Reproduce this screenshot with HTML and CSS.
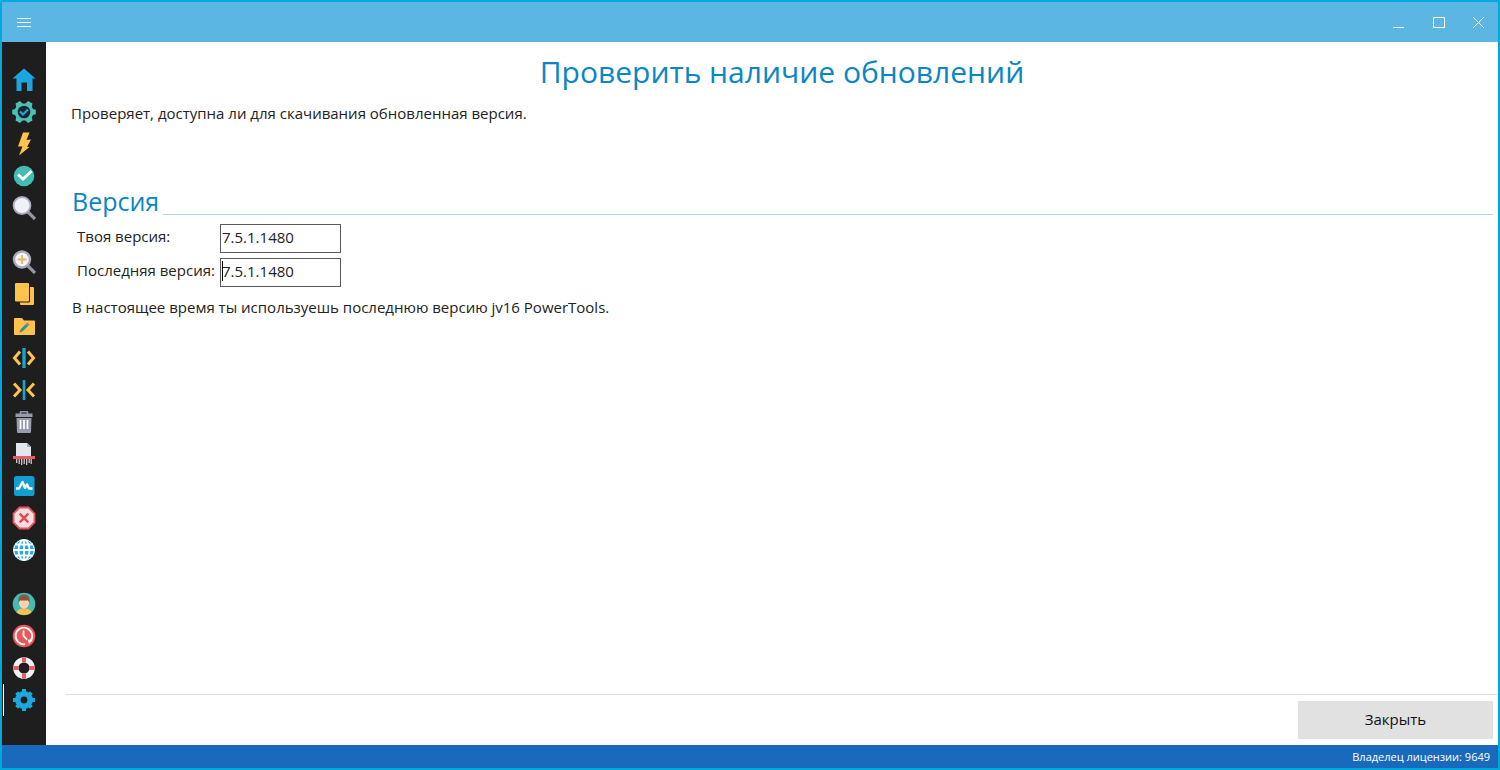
FILE: index.html
```html
<!DOCTYPE html>
<html lang="ru">
<head>
<meta charset="utf-8">
<title>Проверить наличие обновлений</title>
<link rel="stylesheet" href="styles.css">
</head>
<body>
<div class="window">
  <header class="titlebar">
    <button class="bar-btn" aria-label="Меню"><svg width="16" height="16" viewBox="0 0 16 16"><path d="M1 4.500h14M1 8.500h14M1 12.500h14" stroke="#fff" fill="none"/></svg></button>
    <div class="controls">
      <button class="bar-btn" aria-label="Свернуть"><svg width="14" height="14" viewBox="0 0 14 14"><path d="M1 12.500h11" stroke="#fff" fill="none"/></svg></button>
      <button class="bar-btn" aria-label="Развернуть"><svg width="14" height="14" viewBox="0 0 14 14"><path d="M1.500 2.500h11v10h-11z" stroke="#fff" fill="none"/></svg></button>
      <button class="bar-btn" aria-label="Закрыть окно"><svg width="14" height="14" viewBox="0 0 14 14"><path d="M1 2l11 11M12 2l-11 11" stroke="#fff" fill="none"/></svg></button>
    </div>
  </header>
  <div class="middle">
    <nav class="sidebar">
      <div class="group">
        <button class="item" aria-label="Главная"><svg viewBox="0 0 24 24"><path d="M12 .5L23.500 10.500H20.500V23H15V14.500H9.500V23H4.500V10.500H.5z" fill="#1da5e0"/></svg></button>
        <button class="item" aria-label="Оптимизация"><svg viewBox="0 0 24 24"><path d="M8 1l2.500 2.500h3L16 1l4.500 2.500-.7 3.500 1.200 2 2.800.8v4.400l-2.800.8-1.200 2 .7 3.500L16 23l-2.500-2.500h-3L8 23l-4.500-2.500.7-3.500L3 15l-2.800-.8V9.800L3 9l1.200-2-.7-3.500z" fill="#4cc0b2"/><circle cx="12" cy="12" r="6.300" fill="#16262c"/><path d="M8 11.500l3 3 5-5" stroke="#1da5e0" stroke-width="2.200" fill="none"/></svg></button>
        <button class="item" aria-label="Ускорение"><svg viewBox="0 0 24 24"><path d="M11 .5h6.500l-3 7.500 4.500-.5-4 7.500h2.500L7 23.500l3.500-9H6z" fill="#ffc24a"/></svg></button>
        <button class="item" aria-label="Очистка"><svg viewBox="0 0 24 24"><circle cx="12" cy="12" r="10.300" fill="#43bdb1"/><path d="M6 10.500l5 4.500 8.500-8" stroke="#fff" stroke-width="2.800" fill="none"/></svg></button>
        <button class="item" aria-label="Поиск"><svg viewBox="0 0 24 24"><path d="M16 16l7 7" stroke="#9694a3" stroke-width="3.200"/><path d="M15.500 15.500l2 2" stroke="#b8864b" stroke-width="2"/><circle cx="10" cy="9.500" r="8.500" fill="#eef1f7" stroke="#aaa9bd" stroke-width="1.800"/></svg></button>
      </div>
      <div class="group">
        <button class="item" aria-label="Расширенный поиск"><svg viewBox="0 0 24 24"><path d="M16 16l7 7" stroke="#9694a3" stroke-width="3.200"/><circle cx="10" cy="9.500" r="8" fill="#f5f3f7" stroke="#aaa9bd" stroke-width="2.400"/><path d="M10 5v9M5.500 9.500h9" stroke="#f0b35c" stroke-width="1.800"/></svg></button>
        <button class="item" aria-label="Копировать"><svg viewBox="0 0 24 24"><rect x="8" y="5" width="14" height="18" rx="1" fill="#ffc24a"/><rect x="2" y="0" width="16" height="20.500" rx="1.500" fill="#1e1e1e"/><rect x="3" y="1" width="14" height="18.500" rx="1" fill="#ffc24a"/></svg></button>
        <button class="item" aria-label="Переименовать"><svg viewBox="0 0 24 24"><path d="M2 5q0-1 1-1h7l2 2.500h10q1 0 1 1V20q0 1-1 1H3q-1 0-1-1z" fill="#ffc24a"/><path d="M9.500 16.500l5.500-5.500" stroke="#1899ba" stroke-width="3"/><path d="M15 11l1.500-1.500" stroke="#e95b61" stroke-width="3"/><path d="M7.500 18.500l.7-3 2.200 2.200z" fill="#a76936"/></svg></button>
        <button class="item" aria-label="Разделить"><svg viewBox="0 0 24 24"><path d="M12 2v20" stroke="#0eaad5" stroke-width="3.300"/><path d="M8 5.500L2.500 12 8 18.500M16 5.500l5.500 6.500-5.500 6.500" stroke="#ffc24a" stroke-width="3" fill="none"/></svg></button>
        <button class="item" aria-label="Объединить"><svg viewBox="0 0 24 24"><path d="M12 2v20" stroke="#0eaad5" stroke-width="2.600"/><path d="M2 5.500L8 12l-6 6.500M22 5.500L16 12l6 6.500" stroke="#ffc24a" stroke-width="3" fill="none"/></svg></button>
        <button class="item" aria-label="Удалить"><svg viewBox="0 0 24 24"><path d="M8.500 4V1.700h7V4" stroke="#9699a9" stroke-width="1.500" fill="none"/><path d="M3.500 3.500h17v3.500h-17zM4.500 8h15L19 22q0 1-1 1H6q-1 0-1-1z" fill="#969cad"/><path d="M8.500 10v9M12 10v9M15.500 10v9" stroke="#fff" stroke-width="1.700"/></svg></button>
        <button class="item" aria-label="Шредер"><svg viewBox="0 0 24 24"><path d="M4 1h11l4 4v10H4z" fill="#e2e6ee"/><path d="M15 1v4h4z" fill="#aaa9bd"/><path d="M1 14h22v3H1z" fill="#e95b61"/><path d="M4.700 17v4M7.200 17v5M9.700 17v6M12.200 17v5M14.700 17v6M17.200 17v4M19.200 17v5" stroke="#d8d9df" stroke-width="1.200"/></svg></button>
        <button class="item" aria-label="Монитор"><svg viewBox="0 0 24 24"><rect x="2" y="2" width="20.500" height="20" rx="2.500" fill="#139ed2"/><path d="M4 14.500h3L10.500 8l2.500 6 2-3.500 2 4h3.500" stroke="#fff" stroke-width="2.400" stroke-linejoin="round" fill="none"/></svg></button>
        <button class="item" aria-label="Блокировка"><svg viewBox="0 0 24 24"><path d="M7.500 1.500h9l6 6v9l-6 6h-9l-6-6v-9z" fill="#f3dfe3" stroke="#e75358" stroke-width="1.800"/><path d="M7.700 7.700l8.600 8.600M16.300 7.700l-8.600 8.600" stroke="#e44950" stroke-width="2.500"/></svg></button>
        <button class="item" aria-label="Интернет"><svg viewBox="0 0 24 24"><circle cx="12" cy="12" r="11" fill="#28a8db"/><g fill="none" stroke="#fff" stroke-width="1.800"><ellipse cx="12" cy="12" rx="5.500" ry="10"/><circle cx="12" cy="12" r="10.300" stroke-width="1"/><path d="M12 1v22M1 12h22M3 6.500h18M3 17.500h18"/></g></svg></button>
      </div>
      <div class="group">
        <button class="item" aria-label="Профиль"><svg viewBox="0 0 24 24"><circle cx="12" cy="12" r="11.300" fill="#43bdb1"/><path d="M4.500 20.500q1.500-4 7.500-4t7.500 4q-7 5-15 0z" fill="#ffc24a"/><path d="M10 14h4v4q-2 1.500-4 0z" fill="#efaa83"/><path d="M7 8h10v3.500q-1 5-5 5t-5-5z" fill="#ffd1ad"/><path d="M6.500 11V7q.5-4.500 5.500-4.500T17.500 7v4L16 8.500H8z" fill="#895743"/></svg></button>
        <button class="item" aria-label="Резервные копии"><svg viewBox="0 0 24 24"><circle cx="12" cy="12" r="11.300" fill="#ed5558"/><path d="M13 20.200A8.300 8.300 0 1 1 18.500 17" fill="none" stroke="#fff" stroke-width="1.800"/><path d="M15.500 15.500l5 .5-3.500 4z" fill="#fff"/><path d="M11.500 6.500V12l3.500 3.500" stroke="#fff" stroke-width="1.800" fill="none"/></svg></button>
        <button class="item" aria-label="Помощь"><svg viewBox="0 0 24 24"><circle cx="12" cy="12" r="8.200" fill="none" stroke="#edf0f6" stroke-width="5.200"/><g fill="#ef5b5d"><path d="M10 1.500h4v5h-4zM10 17.500h4v5h-4zM1.500 10h5v4h-5zM17.500 10h5v4h-5z"/></g></svg></button>
        <button class="item item-active" aria-label="Настройки"><svg viewBox="0 0 24 24"><g stroke="#1da7df" stroke-width="4"><path d="M12 1v5M12 18v5M1 12h5M18 12h5M4.600 4.600l3 3M16.400 16.400l3 3M19.400 4.600l-3 3M7.600 16.400l-3 3"/></g><circle cx="12" cy="12" r="6.200" fill="none" stroke="#1da7df" stroke-width="5.500"/></svg></button>
      </div>
    </nav>
    <main class="main">
      <h1 class="title">Проверить наличие обновлений</h1>
      <p class="intro">Проверяет, доступна ли для скачивания обновленная версия.</p>
      <section class="section">
        <h2 class="section-title">Версия</h2>
        <div class="fields">
          <label for="current">Твоя версия:</label>
          <input class="field" id="current" type="text" value="7.5.1.1480" readonly>
          <label for="latest">Последняя версия:</label>
          <span class="caret-box"><input class="field" id="latest" type="text" value="7.5.1.1480" readonly></span>
        </div>
        <p class="result">В настоящее время ты используешь последнюю версию jv16 PowerTools.</p>
      </section>
      <div class="actions"><button class="close">Закрыть</button></div>
    </main>
  </div>
  <footer class="status">Владелец лицензии: 9649</footer>
</div>
</body>
</html>
```
FILE: styles.css
```css
* { box-sizing: border-box; }
body {
  margin: 0;
  font: 15px/20px "Open Sans", "Noto Sans", sans-serif;
  color: #222;
}
button { font: inherit; border: 0; padding: 0; background: none; }
h1, h2, p { margin: 0; font-weight: 400; }
svg { display: block; }
.window {
  display: flex;
  flex-direction: column;
  min-height: 100vh;
  border: 2px solid #00a9dc;
  background: #fff;
}
.titlebar {
  display: flex;
  align-items: center;
  justify-content: space-between;
  height: 40px;
  padding: 0 3px 0 6px;
  background: #5cb6e4;
}
.bar-btn { display: grid; place-items: center; width: 32px; height: 32px; }
.controls { display: flex; gap: 8px; }
.middle { display: flex; flex: 1; }
.sidebar {
  display: flex;
  flex-direction: column;
  gap: 22px;
  width: 44px;
  padding: 22px 1px;
  background: #1e1e1e;
}
.group { display: flex; flex-direction: column; }
.item { display: grid; place-items: center; height: 32px; border: 0 solid #1e1e1e; border-width: 0 1px; }
.item svg { width: 24px; height: 24px; }
.item-active { border-left-color: #fff; }
.main { display: flex; flex-direction: column; flex: 1; padding-left: 20px; }
.title {
  padding-top: 10px;
  font-size: 30px;
  line-height: 40px;
  text-align: center;
  color: #0a86c4;
}
.intro { padding: 11px 5px 0; }
.section { padding: 64px 5px 0 6px; }
.section-title {
  display: flex;
  gap: 4px;
  font-size: 25px;
  line-height: 28px;
  color: #0a86c4;
}
.section-title::after { content: ""; flex: 1; border-bottom: 1px solid #b5d6ea; }
.fields {
  display: grid;
  grid-template-columns: 143px 121px;
  row-gap: 5px;
  align-items: center;
  padding: 9px 0 0 5px;
}
.fields label { padding-bottom: 6px; white-space: nowrap; }
.field {
  display: block;
  width: 100%;
  height: 29px;
  padding: 0 1px 4px;
  border: 1px solid #5a5a5a;
  font: inherit;
  color: #222;
}
.caret-box { position: relative; }
.caret-box::after { content: ""; position: absolute; left: 2px; top: 3px; width: 1px; height: 20px; background: #000; }
.result { padding-top: 10px; }
.actions {
  display: flex;
  justify-content: flex-end;
  margin-top: auto;
  padding: 6px 5px;
  border-top: 1px solid #dedede;
}
.close { width: 195px; height: 38px; padding-bottom: 2px; background: #e1e1e1; color: #111; }
.status {
  height: 23px;
  padding-right: 8px;
  background: #196abd;
  color: #fff;
  font-size: 11px;
  line-height: 24px;
  text-align: right;
}
```
